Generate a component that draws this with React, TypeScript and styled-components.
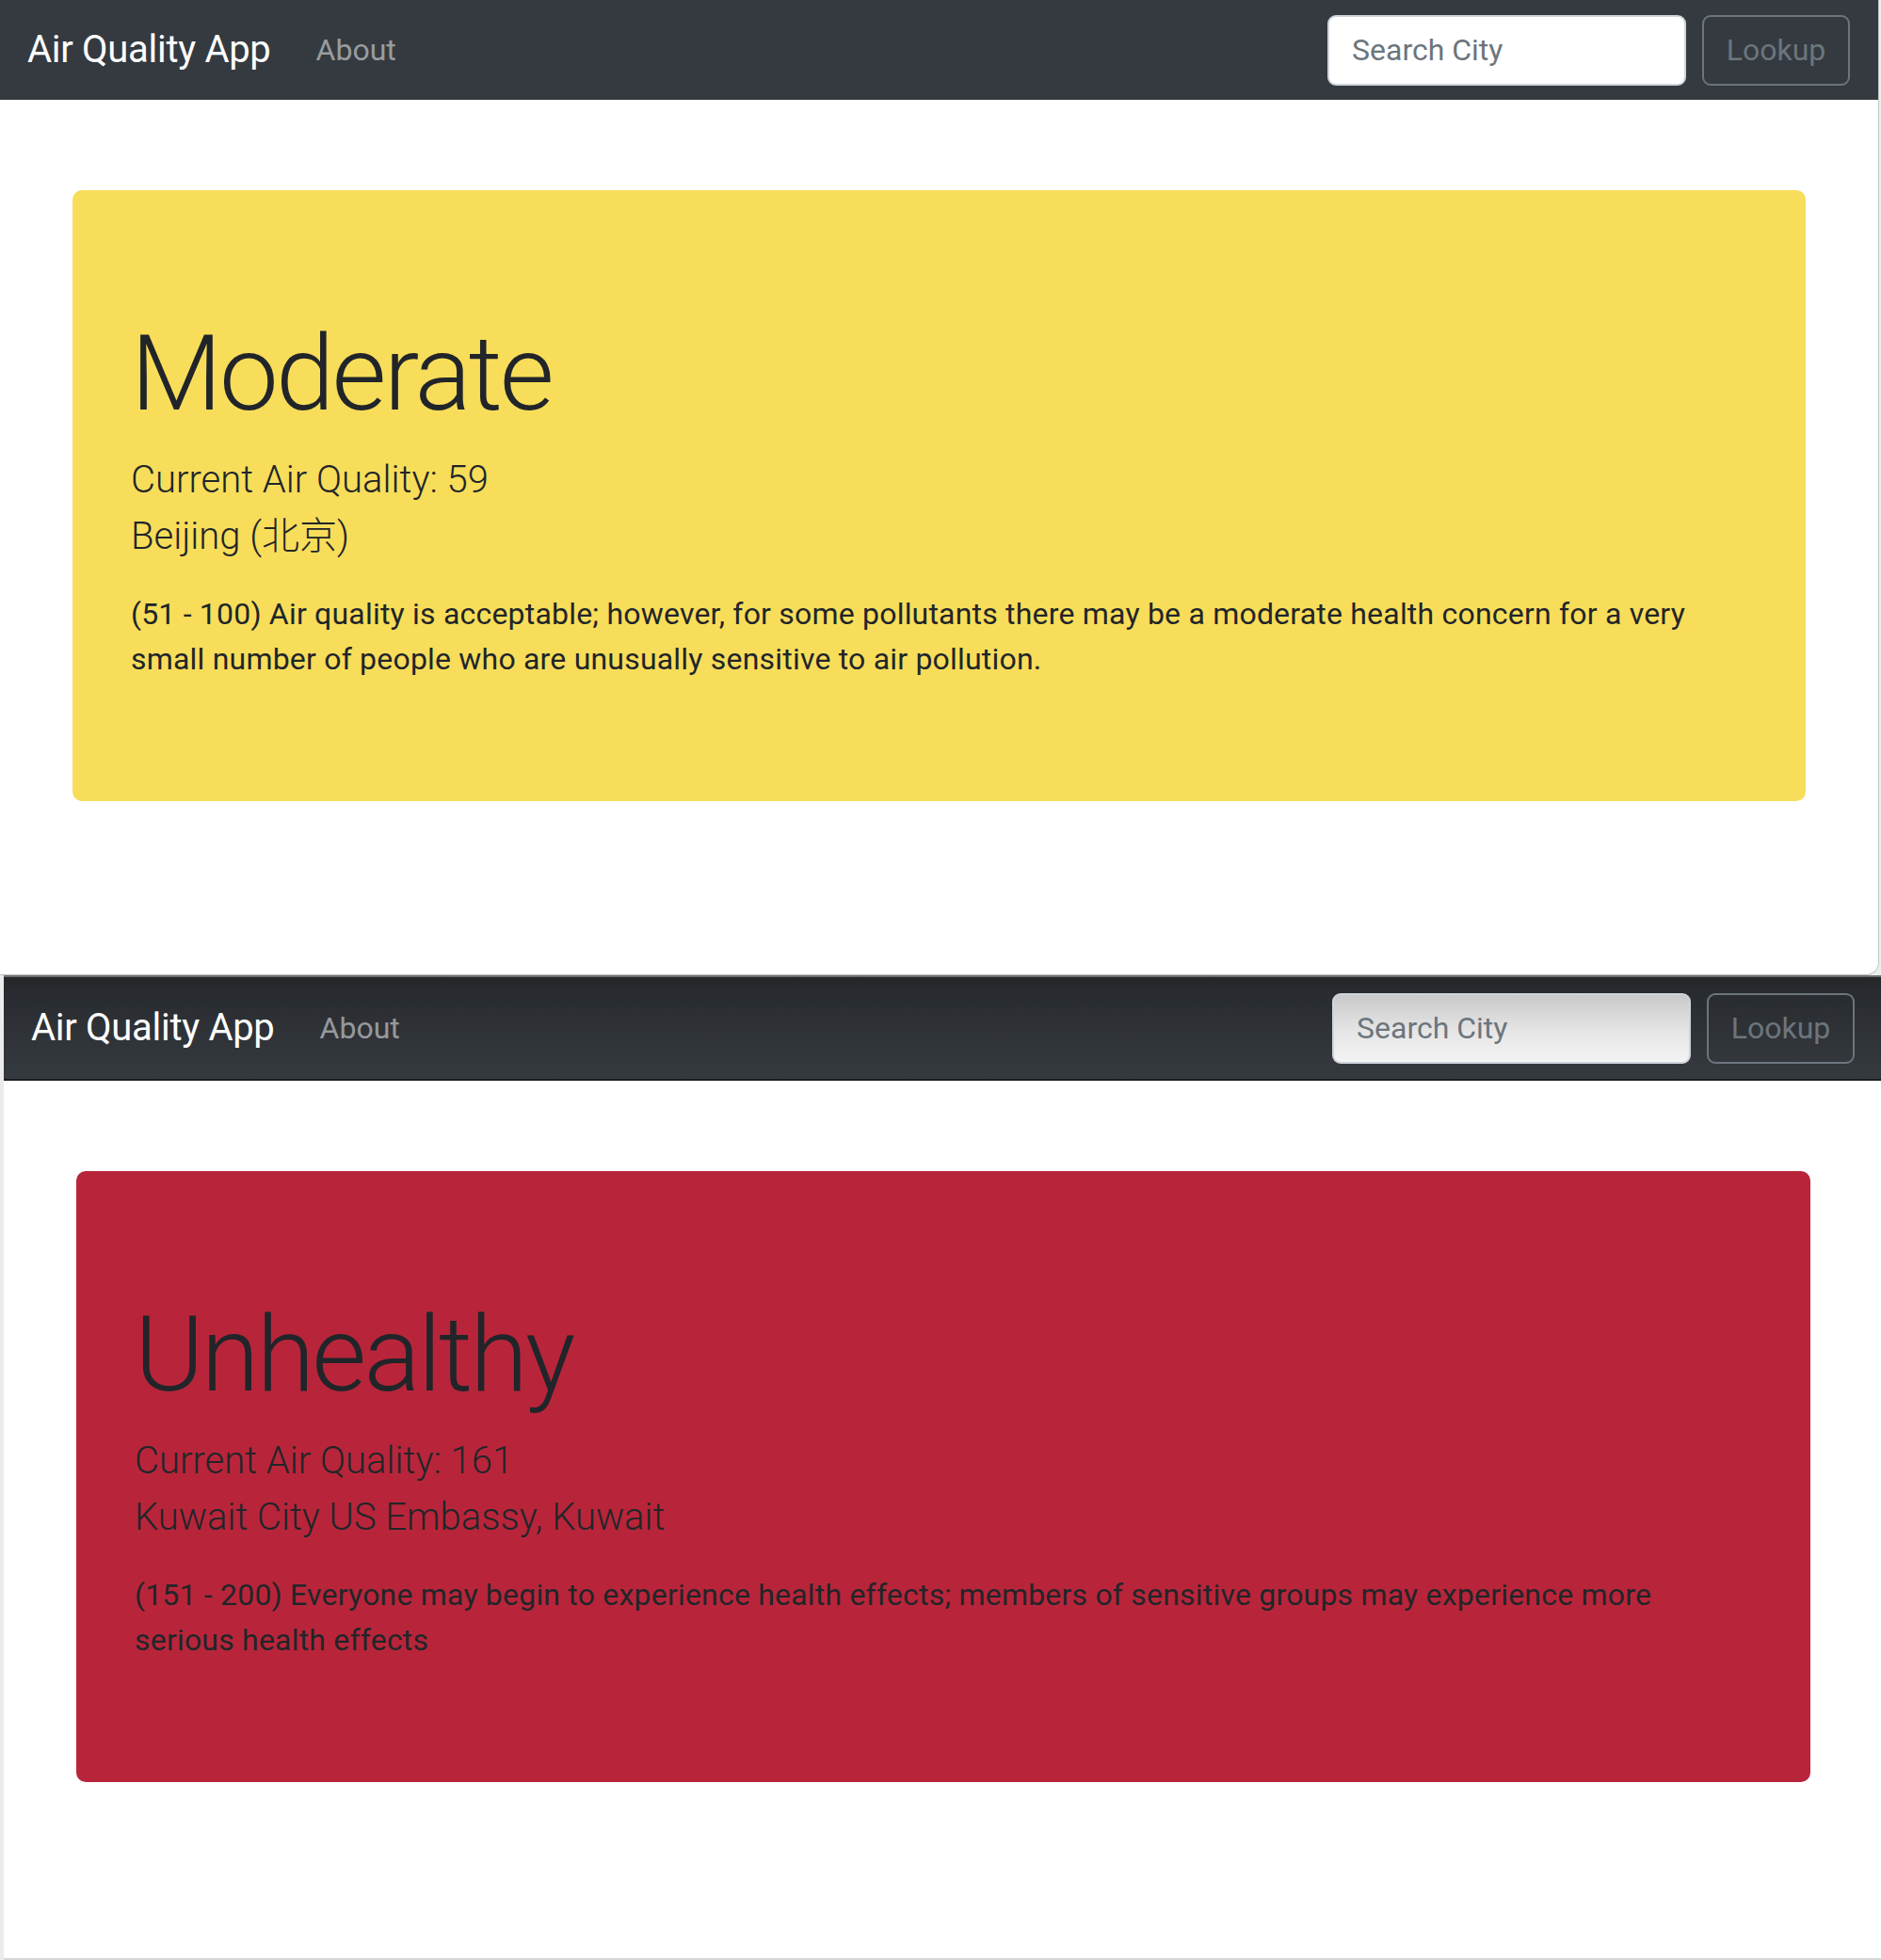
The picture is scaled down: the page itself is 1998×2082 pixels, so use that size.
import React from "react";
import styled, { createGlobalStyle, css } from "styled-components";

const GlobalStyle = createGlobalStyle`
  html, body {
    margin: 0;
    padding: 0;
    background: #ececec;
    overflow-x: hidden;
  }
  body {
    font-family: Roboto, Inter, "Noto Sans", "Noto Sans CJK SC", sans-serif;
    color: #212529;
    -webkit-font-smoothing: antialiased;
  }
  * { box-sizing: border-box; }
`;

const Page = styled.div`
  width: 1998px;
  height: 2082px;
  display: flex;
  flex-direction: column;
  overflow: hidden;
`;

const Frame = styled.div<{ $second?: boolean }>`
  flex: none;
  width: 1996px;
  background: #fff;
  overflow: hidden;
  ${(p) =>
    p.$second
      ? css`
          height: 1046px;
          margin-left: 4px;
          border-top: 2px solid #6f6f6f;
          border-bottom: 2px solid #d6d6d6;
        `
      : css`
          height: 1036px;
          border-right: 1px solid #c9c9c9;
          border-bottom: 1px solid #bdbdbd;
          border-bottom-right-radius: 14px;
        `}
`;

const NavBar = styled.nav<{ $second?: boolean }>`
  display: flex;
  align-items: center;
  justify-content: space-between;
  padding: 0 30px 0 29px;
  height: ${(p) => (p.$second ? "110px" : "106px")};
  background: ${(p) =>
    p.$second ? "linear-gradient(180deg, #25282b 0%, #2f3338 55%, #353a3f 100%)" : "#343a40"};
  ${(p) => p.$second && css`border-bottom: 2px solid #1c1e20;`}
`;

const NavLeft = styled.div`
  display: flex;
  align-items: center;
  gap: 48px;
`;

const Brand = styled.a`
  font-size: 40px;
  line-height: 60px;
  letter-spacing: -0.3px;
  color: #fff;
  text-decoration: none;
  white-space: nowrap;
`;

const NavLink = styled.a`
  font-size: 32px;
  line-height: 48px;
  color: rgba(255, 255, 255, 0.5);
  text-decoration: none;
`;

const SearchForm = styled.form`
  display: flex;
  align-items: center;
  gap: 17px;
`;

const SearchInput = styled.input<{ $second?: boolean }>`
  width: 381px;
  height: 75px;
  padding: 0 24px;
  font-family: inherit;
  font-size: 32px;
  color: #495057;
  border: 2px solid #ced4da;
  border-radius: 9px;
  background: ${(p) => (p.$second ? "linear-gradient(180deg, #c9c9c9 0%, #e6e6e6 55%, #f3f3f3 100%)" : "#fff")};
  outline: none;
  &::placeholder { color: #6c757d; }
`;

const LookupButton = styled.button`
  width: 157px;
  height: 75px;
  font-family: inherit;
  font-size: 32px;
  color: #6c757d;
  background: transparent;
  border: 2px solid #6c757d;
  border-radius: 9px;
  padding: 0;
`;

const Container = styled.main`
  padding: 96px 77px 0 77px;
`;

const Jumbotron = styled.section<{ $bg: string }>`
  background: ${(p) => p.$bg};
  border-radius: 10px;
  padding: 128px 90px 127px 62px;
`;

const Title = styled.h1`
  margin: 0 0 16px 0;
  font-size: 112px;
  font-weight: 300;
  line-height: 1.2;
  letter-spacing: -2.8px;
`;

const Lead = styled.p`
  margin: 0 0 28px 0;
  font-size: 40px;
  font-weight: 300;
  line-height: 60px;
`;

const Description = styled.p`
  margin: 0;
  font-size: 32px;
  font-weight: 400;
  line-height: 48px;
  letter-spacing: 0.2px;
`;

type Reading = {
  level: string;
  aqi: number;
  city: string;
  text: string;
  color: string;
};

const readings: Reading[] = [
  {
    level: "Moderate",
    aqi: 59,
    city: "Beijing (北京)",
    text:
      "(51 - 100) Air quality is acceptable; however, for some pollutants there may be a moderate health concern for a very small number of people who are unusually sensitive to air pollution.",
    color: "#f8dd5a",
  },
  {
    level: "Unhealthy",
    aqi: 161,
    city: "Kuwait City US Embassy, Kuwait",
    text:
      "(151 - 200) Everyone may begin to experience health effects; members of sensitive groups may experience more serious health effects",
    color: "#b8253a",
  },
];

function Screen({ r, second }: { r: Reading; second?: boolean }) {
  return (
    <Frame $second={second}>
      <NavBar $second={second}>
        <NavLeft>
          <Brand href="#">Air Quality App</Brand>
          <NavLink href="#">About</NavLink>
        </NavLeft>
        <SearchForm onSubmit={(e) => e.preventDefault()}>
          <SearchInput $second={second} placeholder="Search City" />
          <LookupButton type="submit">Lookup</LookupButton>
        </SearchForm>
      </NavBar>
      <Container>
        <Jumbotron $bg={r.color}>
          <Title>{r.level}</Title>
          <Lead>
            Current Air Quality: {r.aqi}
            <br />
            {r.city}
          </Lead>
          <Description>{r.text}</Description>
        </Jumbotron>
      </Container>
    </Frame>
  );
}

export default function App() {
  return (
    <Page>
      <GlobalStyle />
      <Screen r={readings[0]} />
      <Screen r={readings[1]} second />
    </Page>
  );
}
